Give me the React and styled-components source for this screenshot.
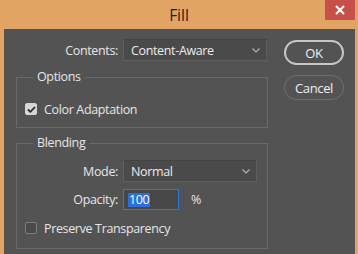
import styled, { createGlobalStyle } from 'styled-components'

const GlobalStyle = createGlobalStyle`
  html, body {
    margin: 0;
    padding: 0;
    background: #e1a465;
  }
  body {
    font-family: "Open Sans", "Noto Sans", sans-serif;
    font-size: 12px;
  }
`

const Frame = styled.div`
  display: flex;
  flex-direction: column;
  width: 358px;
  height: 254px;
  background: #e1a465;
  padding: 0 3px 0 4px;
  box-sizing: border-box;
  overflow: hidden;
`

const TitleBar = styled.div`
  position: relative;
  height: 29px;
  margin: 0 -3px 0 -4px;
  display: flex;
  align-items: center;
  justify-content: center;
  color: #1e1e1e;
  font-size: 15.5px;
  font-family: "Open Sans", sans-serif;
`

const CloseButton = styled.div`
  position: absolute;
  top: 0;
  right: 3px;
  width: 30px;
  height: 20px;
  background: #c8504b;
  display: flex;
  align-items: center;
  justify-content: center;
`

const Body = styled.div`
  flex: 1;
  display: flex;
  gap: 16px;
  background: #535353;
  padding: 10px 11px 0 12px;
  color: #e6e6e6;
  letter-spacing: -0.35px;
`

const Main = styled.div`
  width: 252px;
  display: flex;
  flex-direction: column;
`

const Side = styled.div`
  display: flex;
  flex-direction: column;
  gap: 10px;
  padding-top: 1px;
`

const Row = styled.div`
  display: flex;
  align-items: center;
  height: ${p => p.$h || 22}px;
  margin-top: ${p => p.$mt || 0}px;
`

const Label = styled.span`
  width: ${p => p.$w}px;
  text-align: right;
  padding-right: 5px;
  box-sizing: border-box;
  flex-shrink: 0;
  font-size: 12.5px;
`

const Select = styled.div`
  width: ${p => p.$w}px;
  height: 22px;
  box-sizing: border-box;
  background: #4a4a4a;
  border: 1px solid #5f5f5f;
  border-top-color: #444;
  display: flex;
  align-items: center;
  justify-content: space-between;
  padding: 0 6px 0 7px;
  color: #ececec;
  font-size: 12.5px;
`

const Chevron = () => (
  <svg width="8" height="5" viewBox="0 0 8 5">
    <path d="M0.5 0.5 L4 4 L7.5 0.5" fill="none" stroke="#b5b5b5" strokeWidth="1.1" />
  </svg>
)

const Group = styled.fieldset`
  margin: ${p => p.$mt}px 0 0 0;
  padding: ${p => p.$pt}px 8px ${p => p.$pb}px 8px;
  border: 1px solid #6a6a6a;
  min-width: 0;
`

const Legend = styled.legend`
  margin-left: 8px;
  padding: 0 4px;
  line-height: 16px;
  font-size: 12.5px;
`

const CheckRow = styled.label`
  display: flex;
  align-items: center;
  gap: 7px;
  height: 16px;
  margin-top: ${p => p.$mt || 0}px;
  font-size: 12.5px;
`

const Box = styled.span`
  width: 12px;
  height: 12px;
  box-sizing: border-box;
  border-radius: 2px;
  display: flex;
  align-items: center;
  justify-content: center;
  background: ${p => (p.$checked ? '#d6d6d6' : '#4a4a4a')};
  border: 1px solid ${p => (p.$checked ? '#d6d6d6' : '#7c7c7c')};
`

const NumberField = styled.div`
  width: 56px;
  height: 21px;
  box-sizing: border-box;
  border: 1px solid #2a78e4;
  background: #474747;
  display: flex;
  align-items: center;
  padding-left: 4px;
  font-size: 12.5px;
`

const Selected = styled.span`
  background: #2d6fd9;
  color: #fff;
  padding: 0 1px;
  line-height: 14px;
`

const Unit = styled.span`
  margin-left: 12px;
  font-size: 12.5px;
`

const Button = styled.div`
  width: 60px;
  height: 25px;
  box-sizing: border-box;
  border-radius: 13px;
  border: ${p => (p.$primary ? '2px solid #c6c6c6' : '1.5px solid #6e6e6e')};
  display: flex;
  align-items: center;
  justify-content: center;
  color: #efefef;
  font-size: 13px;
`

export default function App() {
  return (
    <Frame>
      <GlobalStyle />
      <TitleBar>
        Fill
        <CloseButton>
          <svg width="10" height="10" viewBox="0 0 10 10">
            <path d="M1 1 L9 9 M9 1 L1 9" stroke="#fff" strokeWidth="2" />
          </svg>
        </CloseButton>
      </TitleBar>
      <Body>
        <Main>
          <Row>
            <Label $w={107}>Contents:</Label>
            <Select $w={144}>
              Content-Aware
              <Chevron />
            </Select>
          </Row>
          <Group $mt={8} $pt={16} $pb={10}>
            <Legend>Options</Legend>
            <CheckRow>
              <Box $checked>
                <svg width="9" height="7" viewBox="0 0 9 7">
                  <path d="M1 3.5 L3.4 5.8 L8 1" fill="none" stroke="#2a2a2a" strokeWidth="1.8" />
                </svg>
              </Box>
              Color Adaptation
            </CheckRow>
          </Group>
          <Group $mt={7} $pt={9} $pb={12}>
            <Legend>Blending</Legend>
            <Row>
              <Label $w={98}>Mode:</Label>
              <Select $w={134}>
                Normal
                <Chevron />
              </Select>
            </Row>
            <Row $h={21} $mt={7}>
              <Label $w={98}>Opacity:</Label>
              <NumberField>
                <Selected>100</Selected>
              </NumberField>
              <Unit>%</Unit>
            </Row>
            <CheckRow $mt={10}>
              <Box />
              Preserve Transparency
            </CheckRow>
          </Group>
        </Main>
        <Side>
          <Button $primary>OK</Button>
          <Button>Cancel</Button>
        </Side>
      </Body>
    </Frame>
  )
}
